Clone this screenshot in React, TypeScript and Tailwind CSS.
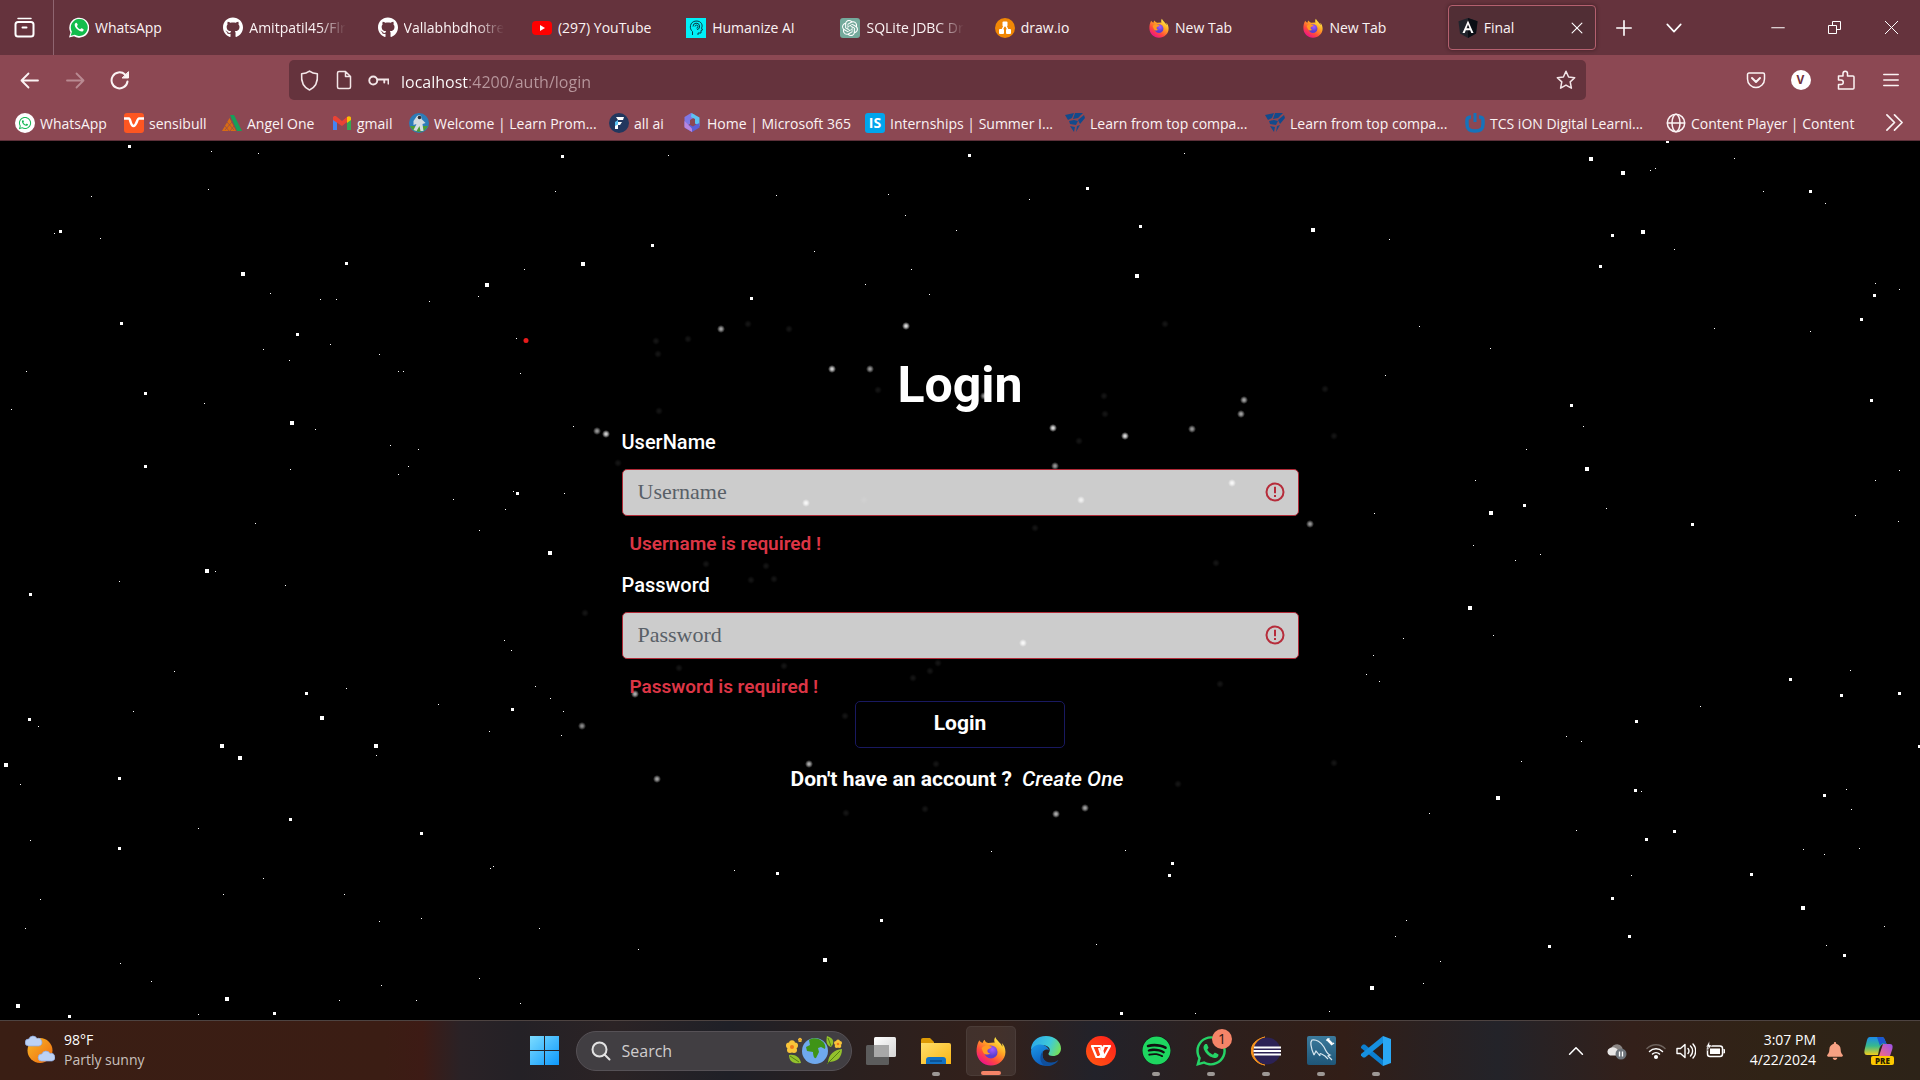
import React from "react";
import { FaGithub, FaWhatsapp, FaSpotify, FaBell } from "react-icons/fa";
import { SiOpenai } from "react-icons/si";

type Star = [number, number, number];

/* Star charts: every entry is x, y, size, in the chart's own units. */
const westChart: Star[] = [
  [338, 9, 3], [552, 18, 1], [675, 23, 1], [1470, 27, 3], [545, 86, 1], [1451, 90, 1], [239, 99, 1],
  [158, 161, 3], [142, 165, 1], [262, 174, 1], [905, 218, 3], [635, 237, 4], [1523, 219, 4], [1370, 229, 1],
  [1272, 256, 4], [1250, 277, 1], [706, 272, 1], [837, 282, 1], [879, 282, 1], [1122, 286, 1], [317, 325, 3],
  [777, 344, 3], [863, 362, 1], [688, 371, 1], [1349, 352, 1], [756, 391, 1], [991, 380, 1], [69, 411, 1],
  [1041, 411, 1], [1054, 411, 1], [1360, 414, 1], [380, 450, 3], [534, 468, 1], [30, 478, 1], [763, 502, 4],
  [824, 514, 1], [1498, 509, 1], [1020, 542, 1], [1093, 550, 1], [380, 580, 3], [758, 585, 1], [1067, 580, 1],
  [1041, 594, 1], [1342, 624, 1], [1352, 628, 3], [1475, 628, 1], [1185, 639, 1], [1320, 656, 1], [667, 681, 1],
  [1253, 694, 1], [1437, 735, 4], [541, 766, 4], [563, 767, 1], [312, 785, 1], [745, 792, 1], [80, 808, 3],
  [1318, 890, 1], [1336, 908, 1], [456, 945, 1], [1399, 972, 1], [905, 975, 1], [801, 984, 3], [1438, 993, 1],
  [1146, 1004, 1], [1339, 1013, 3], [349, 1016, 1], [1472, 1016, 1], [77, 1030, 3], [841, 1028, 4],
  [100, 1043, 1], [1279, 1052, 1], [1467, 1059, 1], [580, 1078, 4], [982, 1078, 4], [984, 1095, 1],
  [627, 1099, 4], [15, 1111, 4], [312, 1136, 3], [53, 1146, 1], [759, 1209, 3], [518, 1225, 1], [1101, 1234, 3],
  [79, 1246, 1], [312, 1260, 3], [1282, 1296, 1], [1289, 1293, 1], [688, 1314, 1], [584, 1342, 1],
  [900, 1342, 1], [106, 1351, 1], [1101, 1385, 1], [991, 1391, 1], [66, 1403, 1], [1410, 1403, 1],
  [315, 1465, 1], [1253, 1492, 1], [396, 1498, 1], [996, 1505, 1], [593, 1528, 4], [887, 1531, 1],
  [1088, 1531, 1], [1360, 1537, 1], [47, 1541, 4], [717, 1554, 3], [518, 1556, 1], [182, 1560, 3],
];
const eastChart: Star[] = [
  [908, 0, 3], [708, 32, 4], [792, 57, 4], [863, 52, 1], [876, 49, 1], [1083, 31, 1], [1159, 90, 1],
  [1282, 90, 3], [1321, 111, 1], [844, 163, 4], [764, 168, 3], [181, 175, 1], [926, 193, 1], [733, 223, 3],
  [1451, 254, 1], [1514, 264, 1], [1449, 275, 3], [1415, 318, 3], [260, 330, 1], [1031, 334, 1], [1282, 339, 1],
  [445, 370, 1], [171, 418, 1], [1441, 462, 3], [657, 471, 3], [688, 509, 1], [539, 550, 1], [698, 584, 4],
  [1514, 587, 1], [406, 605, 1], [1451, 605, 1], [534, 649, 3], [447, 662, 4], [748, 655, 1], [142, 664, 1],
  [1399, 667, 1], [1511, 678, 1], [973, 683, 3], [401, 721, 1], [576, 737, 1], [511, 747, 1], [392, 833, 4],
  [453, 881, 1], [218, 886, 1], [140, 917, 1], [1386, 943, 1], [121, 950, 1], [155, 963, 1], [1229, 959, 3],
  [1514, 984, 3], [1363, 988, 3], [994, 1008, 1], [827, 1034, 3], [643, 1061, 1], [683, 1070, 1],
  [1567, 1079, 3], [526, 1106, 1], [824, 1157, 3], [840, 1159, 1], [1376, 1155, 1], [1318, 1166, 3],
  [465, 1170, 4], [1389, 1191, 1], [285, 1198, 1], [670, 1228, 1], [926, 1230, 3], [853, 1244, 3],
  [1263, 1262, 1], [1410, 1261, 1], [1318, 1271, 1], [1128, 1307, 3], [814, 1309, 1], [764, 1349, 3],
  [1262, 1366, 4], [226, 1389, 1], [1475, 1400, 1], [197, 1417, 1], [809, 1417, 3], [600, 1435, 3],
  [1323, 1433, 1], [1371, 1451, 3], [315, 1462, 1], [270, 1501, 1], [136, 1509, 4], [25, 1551, 1],
];
const midChart: Star[] = [
  [668, 155, 1], [969, 155, 3], [1184, 153, 1], [776, 195, 1], [888, 194, 1], [1087, 188, 3], [1029, 199, 1],
  [905, 215, 1], [956, 230, 1], [1140, 226, 3], [1313, 230, 4], [652, 245, 3], [814, 251, 1], [911, 269, 1],
  [1137, 276, 4], [865, 284, 1], [929, 294, 1], [751, 298, 3], [777, 873, 3], [881, 920, 3], [825, 960, 4],
  [734, 870, 1], [991, 851, 1], [1125, 850, 1], [1172, 863, 3], [1169, 875, 3], [1096, 944, 1], [1121, 1013, 3],
  [1195, 1013, 1], [638, 949, 1], [1329, 1011, 1],
];
const hazyStars: Star[] = [
  [597, 431, 65], [582, 726, 60], [585, 613, 9], [606, 434, 90], [721, 329, 70], [748, 324, 9], [789, 329, 9],
  [906, 326, 95], [656, 341, 9], [688, 339, 9], [658, 354, 9], [832, 369, 90], [870, 369, 65], [878, 390, 9],
  [984, 396, 60], [659, 411, 9], [1104, 396, 9], [1105, 414, 9], [1244, 400, 70], [1241, 414, 70],
  [1053, 428, 95], [1125, 436, 95], [1192, 429, 65], [1079, 441, 9], [1055, 466, 65], [618, 463, 9],
  [1232, 483, 95], [806, 503, 95], [1081, 500, 80], [864, 500, 9], [1310, 524, 65], [1035, 528, 9],
  [706, 564, 9], [766, 566, 9], [1216, 563, 9], [751, 580, 9], [774, 579, 9], [1023, 643, 95], [679, 668, 9],
  [784, 666, 9], [938, 663, 9], [930, 671, 9], [913, 678, 9], [635, 694, 75], [845, 716, 9], [1220, 684, 9],
  [809, 764, 75], [657, 779, 70], [936, 764, 9], [1178, 784, 9], [846, 813, 9], [925, 809, 9],
  [1056, 814, 75], [1085, 808, 70], [1165, 324, 9], [1325, 389, 9], [1334, 436, 9], [1334, 763, 9],
];

function Sky() {
  const west = westChart.map(([x, y, s]) => [x * 0.38265, y * 0.56122, s]);
  const east = eastChart.map(([x, y, s]) => [1320 + x * 0.38265, y * 0.56122, s]);
  const mid = midChart.map(([x, y, s]) => [x, y - 141, s]);
  return (
    <svg aria-hidden="true" viewBox="0 0 1920 879" preserveAspectRatio="xMidYMid slice" className="absolute inset-0 h-full w-full">
      <defs>
        <radialGradient id="haze">
          <stop offset="0" stopColor="#fff" />
          <stop offset=".4" stopColor="#fff" stopOpacity=".7" />
          <stop offset="1" stopColor="#fff" stopOpacity="0" />
        </radialGradient>
      </defs>
      {[...west, ...east, ...mid].map(([x, y, s], i) => (
        <rect key={i} x={Math.round(x - s / 2)} y={Math.round(y - s / 2)} width={s} height={s} fill="#fff" />
      ))}
      {hazyStars.map(([x, y, o], i) => (
        <circle key={i} cx={x} cy={y - 141} r="4" fill="url(#haze)" opacity={o / 100} />
      ))}
      <circle cx="526" cy="199.500" r="2.5" fill="#e81b1b" />
    </svg>
  );
}

/* ---------- logos ---------- */
function Firefox({ size }: { size: number }) {
  return (
    <svg width={size} height={size} viewBox="0 0 32 32" aria-hidden="true">
      <defs>
        <linearGradient id="ffBody" x1=".85" y1=".1" x2=".25" y2=".95">
          <stop offset="0" stopColor="#fff04a" />
          <stop offset=".35" stopColor="#ffa624" />
          <stop offset=".7" stopColor="#ff4a3d" />
          <stop offset="1" stopColor="#ee1289" />
        </linearGradient>
        <radialGradient id="ffGlobe" cx=".6" cy=".3">
          <stop offset="0" stopColor="#a45cff" />
          <stop offset="1" stopColor="#5b3fd0" />
        </radialGradient>
      </defs>
      <path d="M20.500 1c-1 2-1.500 4-.5 6l-7 .5C10.500 7 9.500 5.500 9.300 4 7.800 5 7.200 6.500 7.200 7.500 5.500 7 4.500 6 3.500 4.500 1.500 8 .5 12 .6 16.500.8 25 7.500 31.500 16 31.500S31.400 24.800 31.400 17c0-4-1.500-7.500-3.900-9.500.6 1.600.8 2.800.7 4C26.500 7 22.500 5.500 20.500 1z" fill="url(#ffBody)" />
      <circle cx="16" cy="17" r="7" fill="url(#ffGlobe)" />
      <path d="M6 13c2-3 5-3.500 7-2.500 1.200.6 3 .6 4 1-1 2-3.500 1.800-4.500 3.200-1 1.500.2 3.800 2.500 4-2 2-6.500 1.300-7.500-1.700z" fill="#ff9a22" />
    </svg>
  );
}
function WhatsAppLogo() {
  return (
    <svg width="21" height="21" viewBox="0 0 24 24" aria-hidden="true">
      <path d="M0 24l1.800-6A12 12 0 1 1 6 22.400z" fill="#fff" />
      <path d="M2 22l1.500-5A10.200 10.200 0 1 1 7 20.600z" fill="#12bd4c" />
      <path d="M8 6.500c-2 1.200-1.200 4.500 1.600 7.400s6.300 4 7.600 2c.6-1 .4-1.600-.2-2l-1.800-.9c-1-.3-1.200 1.200-2 1-1.600-.5-3.300-2.300-3.600-3.500-.1-.6 1-.9.900-1.700L9.600 7c-.3-.7-1-.8-1.600-.5z" fill="#fff" />
    </svg>
  );
}
const tabIcons: Record<string, React.ReactNode> = {
  whatsapp: <WhatsAppLogo />,
  github: <FaGithub size={21} color="#fff" />,
  youtube: (
    <svg width="20" height="20" viewBox="0 0 20 20"><rect y="3" width="20" height="14" rx="4" fill="#f00" /><path d="M8 7l5 3-5 3z" fill="#fff" /></svg>
  ),
  humanize: (
    <svg width="20" height="20" viewBox="0 0 20 20"><rect width="20" height="20" fill="#00f0f8" />
      <path d="M6.500 17v-3.500C3 11 3.500 3.500 10 3c6-.2 7 5 5.500 7l1 2-1.500.5V15h-3v2M7 8.500a3.300 3.300 0 1 1 4 3.200M9 8.500a1.500 1.500 0 1 1 1.500 1.600" fill="none" stroke="#083c48" /></svg>
  ),
  openai: <span className="flex h-5 w-5 items-center justify-center rounded-[3px] bg-[#74aa9c]"><SiOpenai size={16} color="#fff" /></span>,
  drawio: (
    <svg width="20" height="20" viewBox="0 0 20 20"><circle cx="10" cy="10" r="10" fill="#f08705" />
      <path d="M10 6L6.500 13M10 6l3.500 7" stroke="#fff" strokeWidth="1.500" /><rect x="7.500" y="3.500" width="5" height="5" rx="1" fill="#fff" /><rect x="4" y="11" width="5" height="5" rx="1" fill="#fff" /><rect x="11" y="11" width="5" height="5" rx="1" fill="#fff" /></svg>
  ),
  firefox: <Firefox size={20} />,
  angular: (
    <svg width="20" height="20" viewBox="0 0 20 20"><path d="M10 0l9.500 3.300L18 15.500 10 20l-8-4.500L.5 3.300z" fill="#20242c" /><path d="M10 0l9.500 3.300L18 15.500 10 20z" fill="#0b0e15" />
      <path d="M10 2.500L4.500 15h2.200l1.100-2.800h4.400l1.100 2.800h2.200zm0 4l1.500 3.800h-3z" fill="#fff" /></svg>
  ),
};
const tabs = [
  ["WhatsApp", "whatsapp"], ["Amitpatil45/Flr", "github"], ["Vallabhbdhotre", "github"], ["(297) YouTube", "youtube"],
  ["Humanize AI", "humanize"], ["SQLite JDBC Dr", "openai"], ["draw.io", "drawio"], ["New Tab", "firefox"],
  ["New Tab", "firefox"], ["Final", "angular"],
];

function Stroke({ children, size = 20, w = 1.5 }: { children: React.ReactNode; size?: number; w?: number }) {
  return (
    <svg width={size} height={size} viewBox="0 0 20 20" fill="none" stroke="currentColor" strokeWidth={w} strokeLinecap="round" strokeLinejoin="round" aria-hidden="true">
      {children}
    </svg>
  );
}

function TabStrip() {
  return (
    <div className="flex h-[55px] items-stretch bg-[#65333d]">
      <button aria-label="Firefox View" className="mr-0.5 flex w-[54px] items-center justify-center border-r border-[#8f6570] pr-1">
        <svg width="21" height="21" viewBox="0 0 21 21" fill="none" stroke="#fff" strokeWidth="2" strokeLinecap="round"><path d="M4 1.500h13" strokeWidth="1.500" /><rect x="1.500" y="5" width="18" height="14.500" rx="2.500" /><path d="M8.500 10.500h4" /></svg>
      </button>
      <div className="flex w-[1543px] min-w-0 py-[5px]">
        {tabs.map(([title, icon], i) => (
          <div key={i} className="min-w-0 flex-1 px-[3px]">
            <div className={i === 9 ? "flex h-full items-center rounded border border-[#b4606f] bg-[#512e35] px-[9px] shadow-[0_0_4px_#0006]" : "flex h-full items-center px-[10px]"}>
              <button className="flex min-w-0 flex-1 items-center gap-1.5">
                <span className="flex w-5 shrink-0 justify-center">{tabIcons[icon]}</span>
                <span className={title.length > 13 ? "overflow-hidden pt-px text-sm whitespace-nowrap text-[#fbf3f4] [mask-image:linear-gradient(to_right,black_72%,transparent)]" : "pt-px text-sm whitespace-nowrap text-[#fbf3f4]"}>{title}</span>
              </button>
              {i === 9 && (
                <button aria-label="Close tab" className="mr-0.5 text-white"><Stroke size={14} w={1.6}><path d="M3 3l14 14M17 3L3 17" /></Stroke></button>
              )}
            </div>
          </div>
        ))}
      </div>
      <button aria-label="New tab" className="flex w-[50px] items-center justify-center text-white"><Stroke size={18} w={1.8}><path d="M10 2v16M2 10h16" /></Stroke></button>
      <button aria-label="List all tabs" className="flex w-[50px] items-center justify-center text-white"><Stroke size={18} w={1.8}><path d="M2.500 6l7.500 8 7.500-8" /></Stroke></button>
      <div className="flex-1" />
      <button aria-label="Minimize" className="flex w-[57px] items-center justify-center text-white"><Stroke size={14}><path d="M1 9.500h18" /></Stroke></button>
      <button aria-label="Restore" className="flex w-[57px] items-center justify-center text-white">
        <svg width="13" height="13" viewBox="0 0 13 13" fill="none" stroke="#fff"><path d="M.5 4.500h8v8h-8zM4.500 4.500v-4h8v8h-4" /></svg>
      </button>
      <button aria-label="Close window" className="flex w-[57px] items-center justify-center text-white">
        <svg width="15" height="15" viewBox="0 0 15 15" stroke="#fff"><path d="M1 1l13 13M14 1L1 14" /></svg>
      </button>
    </div>
  );
}

const navBtn = "flex w-[45px] shrink-0 items-center justify-center text-[#fbf3f4]";

function NavBar() {
  return (
    <div className="flex h-[50px] items-center bg-[#8c4853] px-[7px]">
      <button aria-label="Back" className={navBtn}><Stroke w={1.8}><path d="M1.500 10.500H18M8.500 3.500l-7 7 7 7" /></Stroke></button>
      <button aria-label="Forward" className="flex w-[45px] shrink-0 items-center justify-center text-[#b98a92]"><Stroke w={1.8}><path d="M18.500 10.500H2M11.500 3.500l7 7-7 7" /></Stroke></button>
      <button aria-label="Reload" className={navBtn}><Stroke w={2}><path d="M17.500 11.500A8 8 0 1 1 15 4.500l2 2" /><path d="M18.500 2v6h-6z" fill="currentColor" strokeWidth="1" /></Stroke></button>
      <div className="flex-1" />
      <div className="flex h-10 w-[1297px] items-center rounded-[5px] bg-[#65333d] px-2.5 text-[#f3e6e8]">
        <Stroke size={21}><path d="M10 1c2 1.500 4 2.300 7.500 2.600C18 10 16 16.500 10 19 4 16.500 2 10 2.500 3.600 6 3.300 8 2.500 10 1z" /></Stroke>
        <span className="ml-3.5"><Stroke><path d="M5 1.500h6.500l5 5V17a1.500 1.500 0 0 1-1.500 1.500H5A1.500 1.500 0 0 1 3.500 17V3A1.500 1.500 0 0 1 5 1.500zM11.500 1.500v5h5" /></Stroke></span>
        <span className="ml-3.5"><Stroke size={21} w={1.8}><circle cx="5" cy="10" r="3.800" /><path d="M9 9h10.500v4M15.500 9v3" /></Stroke></span>
        <input
          aria-label="Address"
          type="text"
          defaultValue="localhost:4200/auth/login"
          className="ml-3 min-w-0 flex-1 bg-[linear-gradient(to_right,#ffffff_67px,#b8979d_67px)] bg-clip-text pt-[3px] text-base text-transparent outline-none"
        />
        <button aria-label="Bookmark this page"><Stroke><path d="M10 1.300l2.600 5.700 6.100.7-4.500 4.200 1.200 6.300L10 15.100l-5.400 3.100 1.200-6.300L1.300 7.700l6.100-.7z" /></Stroke></button>
      </div>
      <div className="flex-1" />
      <button aria-label="Save to Pocket" className={navBtn}><Stroke><path d="M3 3h14a1.500 1.500 0 0 1 1.500 1.500V9a8.500 8.500 0 0 1-17 0V4.500A1.500 1.500 0 0 1 3 3z" /><path d="M6 8l4 4 4-4" strokeWidth="2" /></Stroke></button>
      <button aria-label="Account" className={navBtn}><span className="flex h-5 w-5 items-center justify-center rounded-full bg-white text-xs font-bold text-[#70303c]">V</span></button>
      <button aria-label="Extensions" className={navBtn}><Stroke><path d="M2.500 8V6H7V3.500a2.200 2.200 0 0 1 4.500 0V6H17a1 1 0 0 1 1 1v11a1 1 0 0 1-1 1H2.500v-4.500H5a2 2 0 0 0 0-4.500H2.500z" /></Stroke></button>
      <button aria-label="Menu" className={navBtn}><Stroke size={18} w={1.7}><path d="M2 4h16M2 10h16M2 16h16" /></Stroke></button>
    </div>
  );
}

const cube = (
  <svg width="20" height="20" viewBox="0 0 20 20" fill="#124a8c"><path d="M0 2l9-2-2 5-4 2zM10 0h8l-5 5-5 1zM19 2l1 3-5 6-2-4zM4 8l5-1 4 1-2 4-6-1zM5 13l5 1-1 5zM12 13l3-1-4 7z" /></svg>
);
const bookmarks: [string, string, React.ReactNode][] = [
  ["WhatsApp", "w-[109px]", <span className="flex h-5 w-5 items-center justify-center rounded-full bg-white"><FaWhatsapp size={14} color="#18b855" /></span>],
  ["sensibull", "w-[98px]", <svg width="20" height="20" viewBox="0 0 20 20"><rect width="20" height="20" rx="3" fill="#fd5622" /><path d="M0 5.500h5c1.500 0 1.500 7.500 4.500 7.500S13 5.500 15 5.500h5" fill="none" stroke="#fff" strokeWidth="2.500" /></svg>],
  ["Angel One", "w-[110px]", <svg width="20" height="20" viewBox="0 0 20 20"><path d="M8 2h4l8 16h-5z" fill="#16a05a" /><path d="M7.500 5L0 18h14z" fill="#d86c12" /><path d="M5 9l7 8M3 13l4 5M10 9l-7 8M12 13l-4 5" stroke="#8c4853" strokeWidth=".7" /></svg>],
  ["gmail", "w-[77px]", <svg width="20" height="20" viewBox="0 0 20 20"><path d="M1 4v13h4V8z" fill="#4285f4" /><path d="M19 4v13h-4V8z" fill="#34a853" /><path d="M1 5c0-2 2-2.500 3.500-1.500L10 8l5-4v5l-5 4L1 7z" fill="#ea4335" /><path d="M15 4c2-1.500 4-.5 4 1v2l-4 3z" fill="#fbbc04" /></svg>],
  ["Welcome | Learn Prom...", "w-[200px]", <svg width="20" height="20" viewBox="0 0 20 20"><circle cx="10" cy="10" r="10" fill="#2d7cb8" /><path d="M1 13h18A10 10 0 0 1 2 15z" fill="#4e9c33" /><path d="M8 3c3-2 5 0 4.500 3l4 4-3 1 1 7h-3l-1-5-3 5-3-1 3-6-3 1V8z" fill="#d6dce0" /><circle cx="10.500" cy="4.500" r="1.800" fill="#2b3038" /></svg>],
  ["all ai", "w-[73px]", <svg width="20" height="20" viewBox="0 0 20 20"><circle cx="10" cy="10" r="10" fill="#22375e" /><path d="M7 4h8l-1 3H9zM6 9h7l-2 3H9v4H6z" fill="#fff" /><path d="M9 7l-3 2v4l3-1.500z" fill="#5cc4f4" /></svg>],
  ["Home | Microsoft 365", "w-[183px]", <svg width="20" height="20" viewBox="0 0 20 20"><path d="M9 0L2.500 4v10L8 11V7l5-3V2z" fill="#7f78e6" /><path d="M9.500 0l8 4.500V13L13 10.500V6L9 4z" fill="#5cc3f2" /><path d="M17.500 10v4.500L10 19l-7-4 5-3 3 1.500 3-2z" fill="#5b5fd6" /><path d="M2.500 8v6.500L10 19v-3.500l-3-3z" fill="#b886e0" /></svg>],
  ["Internships | Summer I...", "w-[200px]", <span className="flex h-5 w-5 items-center justify-center rounded-[3px] bg-[#00a5ec] text-sm font-bold text-white">IS</span>],
  ["Learn from top compa...", "w-[200px]", cube],
  ["Learn from top compa...", "w-[200px]", cube],
  ["TCS iON Digital Learni...", "w-[201px]", <svg width="20" height="20" viewBox="0 0 20 20" fill="none" stroke="#1673ba" strokeWidth="3.500"><path d="M6 4C1 4 2 8 2 11c0 5 2 7 8 7s8-2 8-7c0-3 1-7-4-7" /><path d="M10 0v9" strokeWidth="3" /></svg>],
  ["Content Player | Content", "w-[200px]", <Stroke><circle cx="10" cy="10" r="8.700" /><ellipse cx="10" cy="10" rx="4" ry="8.700" /><path d="M1.500 10h17" /></Stroke>],
];

function BookmarksBar() {
  return (
    <nav aria-label="Bookmarks" className="flex h-9 items-center border-b border-[#5d3039] bg-[#8c4853] pr-4 pl-[15px] text-[#fbf3f4]">
      {bookmarks.map(([label, width, icon], i) => (
        <a key={i} href="#" className={`${width} flex shrink-0 items-center gap-[5px] text-sm whitespace-nowrap`}>
          <span className="w-5 shrink-0">{icon}</span>
          <span className="pt-0.5">{label}</span>
        </a>
      ))}
      <div className="flex-1" />
      <button aria-label="More bookmarks"><Stroke size={19} w={1.8}><path d="M2 2l8 8-8 8M10 2l8 8-8 8" /></Stroke></button>
    </nav>
  );
}

function Field({ id, label, type, placeholder, error }: { id: string; label: string; type: string; placeholder: string; error: string }) {
  return (
    <div>
      <label htmlFor={id} className="block text-xl leading-[30px] font-medium text-white">{label}</label>
      <div className="relative mt-3">
        <input id={id} type={type} placeholder={placeholder} aria-invalid="true" aria-describedby={`${id}-error`} className="block h-[47px] w-full rounded-[5px] border border-[#b02a37] bg-white/80 pr-12 pb-0.5 pl-[15px] font-['Liberation_Serif',serif] text-[22px] text-black outline-none placeholder:text-[#596067]" />
        <svg aria-hidden="true" className="absolute top-[13px] right-3.5" width="20" height="20" viewBox="0 0 20 20" fill="none" stroke="#b62c3a" strokeWidth="2"><circle cx="10" cy="10" r="8.500" /><path d="M10 4.800v6.400M10 13v2" /></svg>
      </div>
      <p id={`${id}-error`} className="mt-3.5 pl-2 text-[19px] leading-7 font-semibold text-[#dc3545]">{error}</p>
    </div>
  );
}

function LoginPage() {
  return (
    <main className="relative flex flex-1 items-center justify-center bg-black pb-3 font-['Roboto',sans-serif]">
      <Sky />
      <form className="relative w-[677px]" onSubmit={(e) => e.preventDefault()}>
        <h1 className="mb-3 text-center text-[50px] leading-[60px] font-bold text-white">Login</h1>
        <Field id="username" label="UserName" type="text" placeholder="Username" error="Username is required !" />
        <div className="h-3" />
        <Field id="password" label="Password" type="password" placeholder="Password" error="Password is required !" />
        <button className="mx-auto block h-[47px] w-[210px] rounded-[5px] border border-[#191960] pb-0.5 text-[21px] font-bold text-white">Login</button>
        <p className="mt-4 pr-1.5 text-center text-[21px] leading-[30px] font-bold text-white">
          Don't have an account ?<a href="#" className="ml-2.5 font-medium italic">Create One</a>
        </p>
      </form>
    </main>
  );
}

/* ---------- taskbar ---------- */
function Cloud({ x, y }: { x: number; y: number }) {
  return <path transform={`translate(${x} ${y})`} d="M3.500 11a3.500 3.500 0 0 1 .3-7A4.500 4.500 0 0 1 12 3.500a3.800 3.800 0 0 1 2 7.500z" fill="#bcd2f5" stroke="#8cabe4" strokeWidth=".7" />;
}
const apps: { name: string; icon: React.ReactNode; dot?: boolean; active?: boolean; badge?: string }[] = [
  { name: "Task view", icon: <svg width="30" height="30" viewBox="0 0 30 30"><defs><linearGradient id="tv" x2="1" y2="1"><stop stopColor="#fff" /><stop offset="1" stopColor="#d5d5d5" /></linearGradient></defs><rect x="0" y="9" width="23" height="20" rx="1.500" fill="#5c5c5c" /><rect x="8" y="1" width="22" height="20" rx="1.500" fill="url(#tv)" /><path d="M8 9h15v12H8z" fill="#a8a8a8" /></svg> },
  { name: "File Explorer", dot: true, icon: <svg width="30" height="30" viewBox="0 0 30 30"><defs><linearGradient id="fe" x2="1" y2="1"><stop stopColor="#ffdf6b" /><stop offset="1" stopColor="#fbb615" /></linearGradient></defs><path d="M0 4a2 2 0 0 1 2-2h7l4 4v4H0z" fill="#dd9a05" /><path d="M0 7h28a2 2 0 0 1 2 2v19H0z" fill="url(#fe)" /><path d="M5 28v-4a3 3 0 0 1 3-3h14a3 3 0 0 1 3 3v4z" fill="#1272c4" /><path d="M9 25h12" stroke="#0a4b8a" strokeWidth="1.500" /></svg> },
  { name: "Firefox", active: true, icon: <Firefox size={30} /> },
  { name: "Edge", icon: <svg width="30" height="30" viewBox="0 0 30 30"><defs><linearGradient id="eg1" x1="0" y1=".3" x2="1" y2=".6"><stop stopColor="#2ba8ea" /><stop offset=".6" stopColor="#3fcbd8" /><stop offset="1" stopColor="#75e05a" /></linearGradient><linearGradient id="eg2" x2=".5" y2="1"><stop stopColor="#1c9bea" /><stop offset="1" stopColor="#0c5bbb" /></linearGradient></defs><path d="M0 14C0 6 6 0 15 0c9 0 15 6 15 12.500 0 5-4 7.500-8 7.500-3.500 0-5-1.500-4.500-2.500C21 13 17 9 11 9 6 9 1.500 12 0 14z" fill="url(#eg1)" /><path d="M0 15c1-4 4.500-6.500 9-6.500 5 0 9 3 9 6.500 0-2-6-2.500-6.500 2.500C11 23 15 28 20 29 10 32.500 0 25 0 15z" fill="url(#eg2)" /><path d="M12 15c-2.500 5 1 11.500 8 11.500 3 0 5-.8 7.500-2.500C25 28 20 30 16.500 30 8 29.500 8 19 12 15z" fill="#0f4f9c" /></svg> },
  { name: "WPS Office", icon: <svg width="30" height="30" viewBox="0 0 30 30"><defs><linearGradient id="wps" x1="1" x2="0" y2="1"><stop stopColor="#ff1c1c" /><stop offset="1" stopColor="#ff5a12" /></linearGradient></defs><circle cx="15" cy="15" r="15" fill="url(#wps)" /><path d="M6 10h9l3 11 6-11h-6l-4 11h-3.500zM18 21h-2l-3-9" fill="none" stroke="#fff" strokeWidth="2.200" strokeLinejoin="round" /></svg> },
  { name: "Spotify", dot: true, icon: <span className="flex rounded-full bg-[#111]"><FaSpotify size={29} color="#1ed760" /></span> },
  { name: "WhatsApp", dot: true, badge: "1", icon: <FaWhatsapp size={34} color="#25d366" /> },
  { name: "Eclipse", dot: true, icon: <svg width="30" height="30" viewBox="0 0 30 30"><path d="M14 1C5 3-1 9 0.500 17 2 24 7 28 14 29 0 26 0 5 14 1z" fill="#f7941e" stroke="#f7941e" /><circle cx="16" cy="15" r="13.500" fill="#2c2255" /><path d="M3 11.500h27M2.500 15h27.500M3 18.500h27" stroke="#fff" strokeWidth="2" /></svg> },
  { name: "MySQL Workbench", dot: true, icon: <svg width="29" height="29" viewBox="0 0 29 29"><defs><linearGradient id="my" x2="0" y2="1"><stop stopColor="#3b7a9c" /><stop offset="1" stopColor="#1f5678" /></linearGradient></defs><rect width="29" height="29" rx="2" fill="url(#my)" /><path d="M7 19C4 12 3 6 5 4c4-1 9 2 12 7 2 4 3 7 6 8l-2 1 4 4M7 19l2-4 4 5c-1-4 2-2 5 0l3 3" fill="none" stroke="#d9e8f0" strokeWidth="1.200" /><path d="M20 3l5 5" stroke="#fff" strokeWidth="2.500" /><path d="M19.500 4.500l3-2M24 9l3-2" stroke="#fff" strokeWidth="1.500" /></svg> },
  { name: "Visual Studio Code", dot: true, icon: <svg width="30" height="30" viewBox="0 0 30 30"><path d="M0 10.500l2-2h2L22 24v6L0 12z" fill="#0c7fd0" /><path d="M0 19.500l2 2h2L22 7V0L0 18z" fill="#1690e0" /><path d="M22 0l8 3v24l-8 3z" fill="#2aa8f5" /></svg> },
];

function Taskbar() {
  return (
    <footer className="grid h-[60px] grid-cols-[1fr_auto_1fr] items-center border-t border-[#4d4341] bg-[linear-gradient(to_right,#3a1e14_0%,#3b1d14_20%,#3d1b15_22%,#2a2226_24%,#242126_27%,#2b2325_32%,#1f2027_38%,#2a201f_44%,#33201a_52%,#22222a_57%,#2d1f1c_64%,#321e17_70%,#232329_78%,#33201a_85%,#302316_92%,#2d2318_100%)]">
      <button className="ml-[25px] flex items-center gap-[9px] justify-self-start pb-0.5 text-left">
        <svg width="30" height="30" viewBox="0 0 30 30" aria-hidden="true"><defs><linearGradient id="sun" x2="1" y2="1"><stop stopColor="#f9b825" /><stop offset="1" stopColor="#f06a10" /></linearGradient></defs><circle cx="15" cy="15.500" r="12.500" fill="url(#sun)" /><Cloud x={0} y={0} /><Cloud x={13} y={15} /></svg>
        <span className="text-sm leading-5 text-white">98°F<span className="block text-[#c9c0bd]">Partly sunny</span></span>
      </button>
      <div className="flex items-center">
        <button aria-label="Start" className="flex w-[55px] justify-center">
          <svg width="29" height="29" viewBox="0 0 29 29"><defs><linearGradient id="win" x2="1" y2="1"><stop stopColor="#7cdcff" /><stop offset="1" stopColor="#0d98fb" /></linearGradient></defs><path d="M0 0h14v14H0zM15 0h14v14H15zM0 15h14v14H0zM15 15h14v14H15z" fill="url(#win)" /></svg>
        </button>
        <div className="mr-0.5 ml-1 flex h-10 w-[276px] items-center rounded-full border border-[#565156] bg-[#413e42] pr-2 pl-3.5">
          <svg width="20" height="20" viewBox="0 0 20 20" fill="none" stroke="#e3e3e3" strokeWidth="2" strokeLinecap="round" aria-hidden="true"><circle cx="8.500" cy="8.500" r="7" fill="#5c5a5d" /><path d="M13.500 13.500L18.500 18.500" /></svg>
          <input aria-label="Search" placeholder="Search" className="ml-[11px] min-w-0 flex-1 bg-transparent text-base text-white outline-none placeholder:text-[#d0cdce]" />
          <svg width="57" height="30" viewBox="0 0 57 30" aria-hidden="true">
            <circle cx="29" cy="15" r="13" fill="#6fa9ee" />
            <path d="M23 4c4-3 10-2 13 1 3 2 4 6 3 8l-4-2-3 1 1 4-3 6c-2 1-3-3-3-6l-6-1-1-4 4-2z" fill="#3f9417" />
            {[[6, 11, 6], [52, 8, 4], [14, 4, 2]].map(([x, y, r]) => (
              <g key={x} fill="#f9c53a">
                <circle cx={x - r / 2} cy={y - r / 4} r={r / 2} />
                <circle cx={x + r / 2} cy={y - r / 4} r={r / 2} />
                <circle cx={x} cy={y - r / 1.6} r={r / 2} />
                <circle cx={x - r / 3} cy={y + r / 2} r={r / 2} />
                <circle cx={x + r / 3} cy={y + r / 2} r={r / 2} />
                <circle cx={x} cy={y} r={r / 3} fill="#ee7b1c" />
              </g>
            ))}
            <path d="M3 19c6-1 11 2 12 8-7 1-12-1-12-8zM41 0c7 2 8 7 4 11-5-2-5-6-4-11zM56 13c0 9-5 13-14 13 1-8 6-12 14-13z" fill="#93c12c" />
            <path d="M4 20l9 6M42 2l3 8M54 15L41 28" stroke="#557f12" />
          </svg>
        </div>
        {apps.map((a) => (
          <button key={a.name} aria-label={a.name} className="flex h-[50px] w-[55px] justify-center">
            <span className={a.active ? "relative flex h-[50px] w-[50px] items-center justify-center rounded-[5px] border border-white/5 bg-white/8" : "relative flex h-[50px] w-[50px] items-center justify-center"}>
              {a.icon}
              {a.active && <span className="absolute bottom-0 h-1 w-5 rounded-full bg-[#f58468]" />}
              {a.dot && <span className="absolute bottom-0 h-1 w-2 rounded-full bg-[#9d9895]" />}
              {a.badge && <span className="absolute top-[3px] right-1 flex h-5 w-5 items-center justify-center rounded-full bg-[#f58468] text-sm text-[#2a1410]">{a.badge}</span>}
            </span>
          </button>
        ))}
      </div>
      <div className="flex items-center justify-self-end pr-4 text-white">
        <button aria-label="Show hidden icons" className="flex w-10 justify-center"><Stroke size={16} w={2}><path d="M2 14l8-8 8 8" /></Stroke></button>
        <button aria-label="OneDrive" className="mr-[5px] flex w-10 justify-center">
          <svg width="21" height="18" viewBox="0 0 21 18"><path d="M5 8A6 6 0 0 1 16 5l2 6z" fill="#8b8684" /><path d="M4 13.500A4 4 0 0 1 4 6a6 6 0 0 1 8 2l4 5.500z" fill="#e8e6e5" /><circle cx="15" cy="12" r="5.500" fill="#6f757c" /><path d="M13.500 9.500v5M16.500 9.500v5" stroke="#fff" strokeWidth="1.300" /></svg>
        </button>
        <button aria-label="Network" className="flex w-[30px] justify-center">
          <svg width="20" height="20" viewBox="0 0 20 20" fill="none" stroke="#fff" strokeWidth="1.500" strokeLinecap="round"><path d="M1 7.500a12.700 12.700 0 0 1 18 0" stroke="#6d625c" /><path d="M3.500 10.500a9.200 9.200 0 0 1 13 0M6.500 13a5.200 5.200 0 0 1 7 0" /><circle cx="10" cy="16" r="1.300" fill="#fff" /></svg>
        </button>
        <button aria-label="Volume" className="flex w-[30px] justify-center"><Stroke w={1.4}><path d="M1 7.500v5h3.500l4.500 4V3.500l-4.500 4zM12 7.500a4 4 0 0 1 0 5M14.500 5a7 7 0 0 1 0 10M17 3a10.500 10.500 0 0 1 0 14" /></Stroke></button>
        <button aria-label="Battery" className="flex w-[30px] justify-center pb-0.5">
          <svg width="20" height="18" viewBox="0 0 20 18"><rect x="1.500" y="5" width="15" height="10.500" rx="2.500" fill="none" stroke="#fff" strokeWidth="1.500" /><rect x="4" y="7.500" width="10" height="5.500" fill="#fff" /><path d="M17.500 8.500h1v3.500h-1" stroke="#fff" fill="#fff" /><path d="M3.500 0L0 6h2.500L1.500 9.500 6 4H3.500z" fill="#fff" stroke="#33201a" strokeWidth=".5" /></svg>
        </button>
        <button className="w-[85px] pb-0.5 text-right text-sm leading-5">3:07 PM<span className="block">4/22/2024</span></button>
        <button aria-label="Notifications" className="flex w-[38px] justify-center"><FaBell size={18} color="#f7a183" /></button>
        <button aria-label="Copilot" className="flex w-[50px] justify-center">
          <svg width="30" height="30" viewBox="0 0 30 30"><defs><linearGradient id="cp1" x2="0" y2="1"><stop stopColor="#1c8bea" /><stop offset=".5" stopColor="#37b98c" /><stop offset="1" stopColor="#f4cf1c" /></linearGradient><linearGradient id="cp2" x1="1" x2="0" y2="1"><stop stopColor="#9a52ee" /><stop offset="1" stopColor="#f86a7e" /></linearGradient></defs>
            <path d="M6 1h12c3 0 3 5 5 7-5-1-7 2-8 6l-1 5H3c-3 0-3-3-2-7l2-8c.5-2 1.500-3 3-3z" fill="url(#cp1)" /><path d="M13 1h5c3 0 3 5 5 7-5-2-6 0-7 2z" fill="#1b57d0" /><path d="M19 8h7c3 0 3 3 2 6l-2 6H15z" fill="url(#cp2)" /><rect x="7" y="20" width="23" height="9" rx="2" fill="#fdc800" />
            <text x="18.500" y="27.500" textAnchor="middle" fontSize="8" fontWeight="800" fill="#2a1d00" fontFamily="Open Sans">PRE</text></svg>
        </button>
      </div>
    </footer>
  );
}

export default function App() {
  return (
    <div className="flex min-h-screen flex-col overflow-hidden bg-black font-['Open_Sans',sans-serif]">
      <header>
        <TabStrip />
        <NavBar />
        <BookmarksBar />
      </header>
      <LoginPage />
      <Taskbar />
    </div>
  );
}
